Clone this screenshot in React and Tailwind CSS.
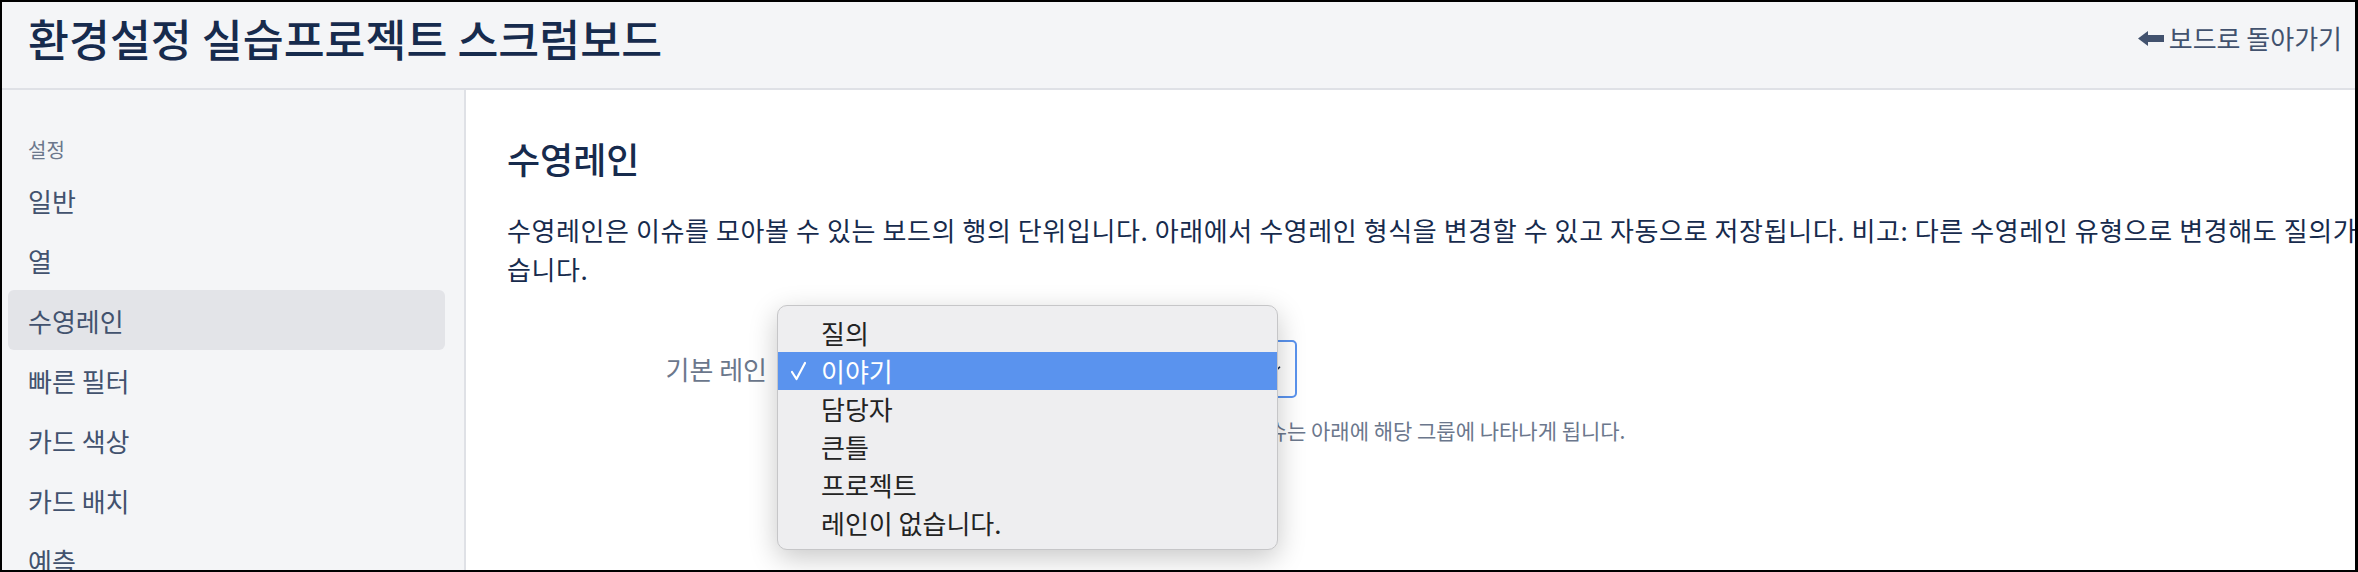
import { ChevronDown } from 'lucide-react'

const NAV = ['일반', '열', '수영레인', '빠른 필터', '카드 색상', '카드 배치', '예측']
const OPTIONS = ['질의', '이야기', '담당자', '큰틀', '프로젝트', '레인이 없습니다.']

function BackArrow() {
  return (
    <svg width="26" height="15" viewBox="0 0 26 15" className="shrink-0">
      <polygon points="0,7.5 10,0 10,15" fill="#42526e" />
      <rect x="9" y="4" width="17" height="7" fill="#42526e" />
    </svg>
  )
}

function Check() {
  return (
    <svg width="15" height="20" viewBox="0 0 15 20">
      <polyline points="1,11 5.5,18 14,2" fill="none" stroke="#fff" strokeWidth="2.2" strokeLinecap="round" strokeLinejoin="round" />
    </svg>
  )
}

function LaneSelect() {
  return (
    <div className="relative w-[519px] h-[58px]">
      <div className="h-full rounded-[5px] border-2 border-[#5a93ee] bg-white flex items-center justify-end pr-[12px]">
        <ChevronDown size={14} strokeWidth={3} className="text-[#172b4d]" />
      </div>

      {/* native dropdown menu, open */}
      <div className="absolute left-[-1px] top-[-35px] w-[501px] rounded-[10px] border border-[#c6c6c8] bg-[#eeeef0] pt-[8px] pb-[7px] shadow-[0_8px_28px_rgba(0,0,0,0.22)] overflow-hidden">
        {OPTIONS.map(opt => {
          const on = opt === '이야기'
          return (
            <div key={opt}
              className={on
                ? 'h-[38px] flex items-center bg-[#5a93ee] text-white'
                : 'h-[38px] flex items-center text-[#232323]'}>
              <span className="w-[43px] pl-[13px] flex items-center">{on && <Check />}</span>
              <span className="text-[26px] leading-[38px]">{opt}</span>
            </div>
          )
        })}
      </div>
    </div>
  )
}

export default function App() {
  return (
    <div className="w-[2358px] h-[572px] overflow-hidden border-2 border-r-[3px] border-black flex flex-col bg-white font-['Noto_Sans_CJK_KR','Noto_Sans',sans-serif]">
      <header className="h-[88px] shrink-0 bg-[#f4f5f7] border-b-2 border-[#dfe1e6] flex items-center justify-between pl-[26px] pr-[13px] pb-[14px]">
        <h1 className="text-[44.5px] leading-[56px] font-medium text-[#172b4d]">환경설정 실습프로젝트 스크럼보드</h1>
        <a className="flex items-center gap-[5px] text-[26px] leading-[32px] text-[#42526e]">
          <BackArrow />
          <span>보드로 돌아가기</span>
        </a>
      </header>

      <div className="flex flex-1 min-h-0">
        <aside className="w-[464px] shrink-0 bg-[#f4f5f7] border-r-2 border-[#dfe1e6] pt-[40px] px-[6px]">
          <div className="h-[40px] flex items-center px-[20px] text-[20px] text-[#6b778c]">설정</div>
          {NAV.map(item => (
            <div key={item}
              className={item === '수영레인'
                ? 'w-[437px] h-[60px] flex items-center px-[20px] rounded-[6px] bg-[#e3e4e8] text-[26px] text-[#42526e]'
                : 'w-[437px] h-[60px] flex items-center px-[20px] text-[26px] text-[#42526e]'}>
              {item}
            </div>
          ))}
        </aside>

        <main className="flex-1 min-w-0 overflow-hidden pt-[46px] pl-[41px]">
          <h2 className="text-[36px] leading-[44px] font-medium text-[#172b4d] mb-[30px]">수영레인</h2>
          <div className="text-[26px] leading-[39px] tracking-[0.6px] text-[#172b4d]">
            <p className="whitespace-nowrap">
              수영레인은 이슈를 모아볼 수 있는 보드의 행의 단위입니다. 아래에서 수영레인 형식을 변경할 수 있고 자동으로 저장됩니다. 비고: 다른 수영레인 유형으로 변경해도 질의가 삭제되지 않
            </p>
            <p>습니다.</p>
          </div>

          <div className="mt-[52px] flex items-center gap-[11px]">
            <label className="w-[260px] text-right text-[26px] leading-[32px] text-[#6b778c]">기본 레인</label>
            <LaneSelect />
          </div>
          <p className="mt-[18px] ml-[271px] text-[21px] leading-[28px] text-[#6b778c] whitespace-nowrap">
            <span className="tracking-[-0.4px]">선택한 기준으로 이슈를 묶어서 보여줍니다. 그룹이 없는 이</span>슈는 아래에 해당 그룹에 나타나게 됩니다.
          </p>
        </main>
      </div>
    </div>
  )
}
